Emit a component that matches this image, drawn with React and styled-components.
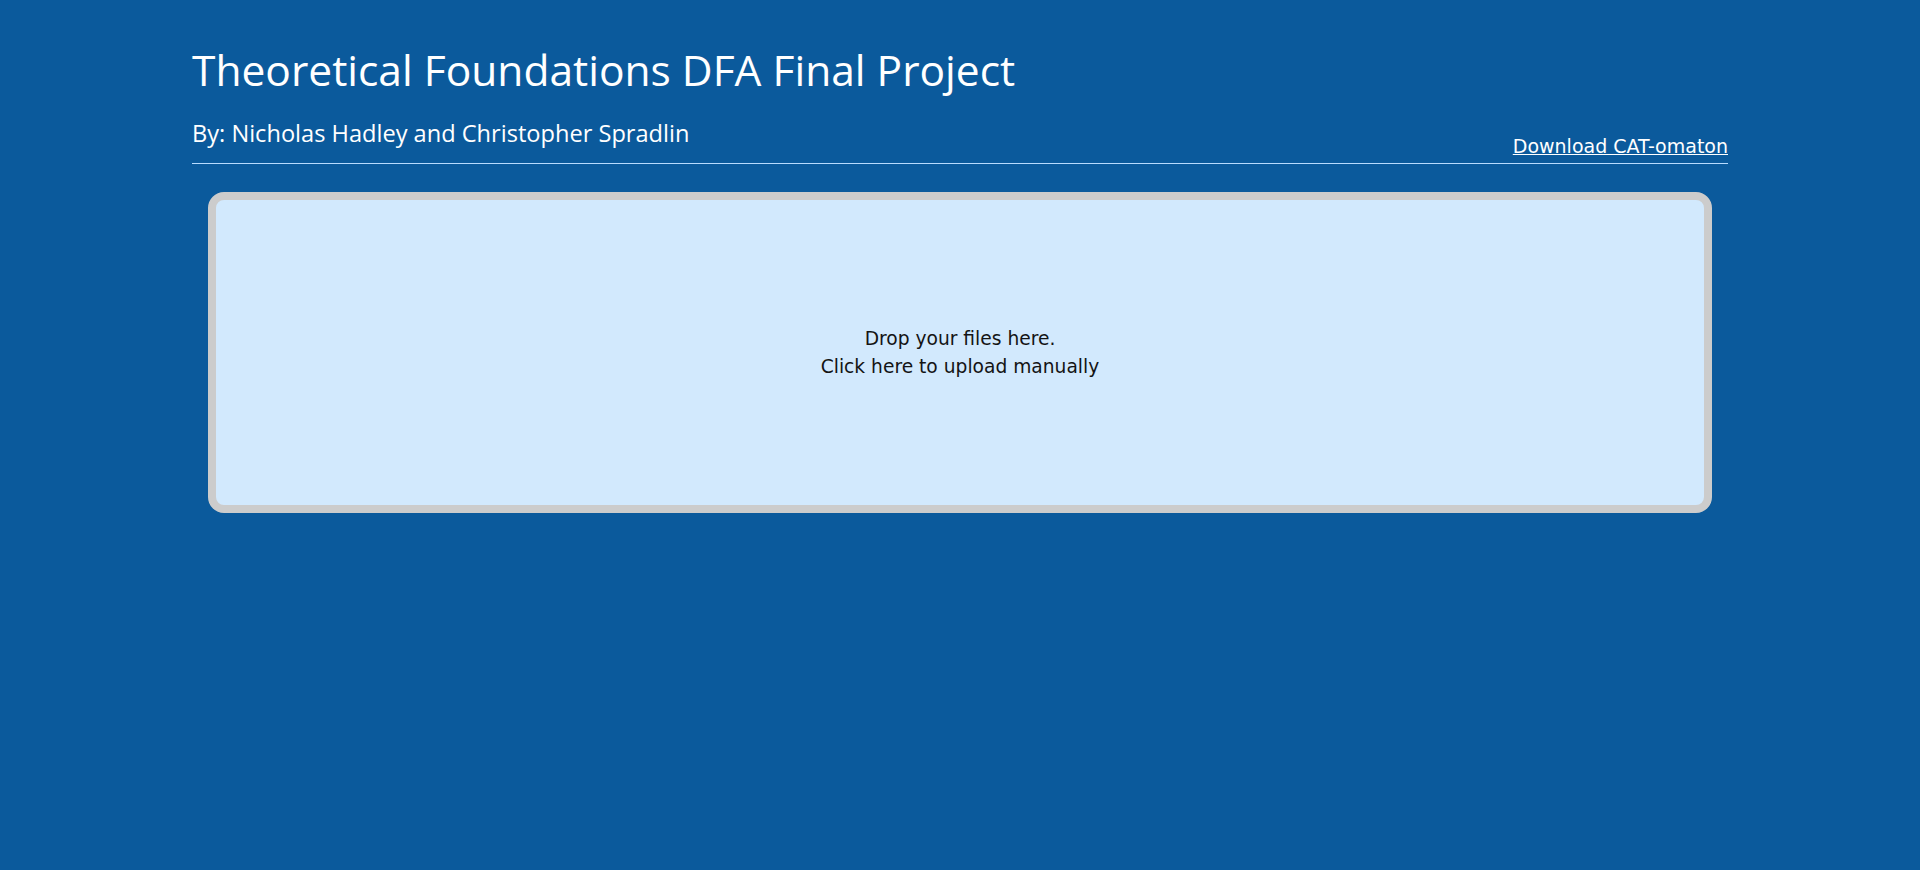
import styled, { createGlobalStyle } from "styled-components";

const GlobalStyle = createGlobalStyle`
  html, body {
    margin: 0;
    padding: 0;
    background-color: #0b5a9c;
    min-height: 100%;
  }
`;

export const Page = styled.div`
  min-height: 870px;
  padding: 0 10%;
  background-color: #0b5a9c;
`;

export const Header = styled.header`
  display: flex;
  justify-content: space-between;
  align-items: flex-end;
  padding-top: 45px;
  border-bottom: 1px solid #b9dcff;
`;

export const TitleBlock = styled.div`
  display: flex;
  flex-direction: column;
  padding-bottom: 15px;
`;

export const Title = styled.h1`
  margin: 0;
  font-family: "Open Sans", "Noto Sans", sans-serif;
  font-weight: 400;
  font-size: 42.5px;
  line-height: 50px;
  color: #ffffff;
`;

export const Authors = styled.h3`
  margin: 23px 0 0 0;
  font-family: "Open Sans", "Noto Sans", sans-serif;
  font-weight: 400;
  font-size: 23.6px;
  line-height: 30px;
  color: #ffffff;
`;

export const DownloadLink = styled.a`
  margin-bottom: 6px;
  font-family: "DejaVu Sans", Verdana, sans-serif;
  font-size: 19px;
  line-height: 22px;
  color: #ffffff;
  text-decoration: underline;
  cursor: pointer;
`;

export const DropZone = styled.div`
  box-sizing: border-box;
  height: 321px;
  margin: 28px 16px 0 16px;
  display: flex;
  flex-direction: column;
  justify-content: center;
  align-items: center;
  background-color: #d2e9fd;
  border: 8px solid #cccccc;
  border-radius: 16px;
  cursor: pointer;

  p {
    margin: 0;
    font-family: "DejaVu Sans", Verdana, sans-serif;
    font-size: 18.67px;
    line-height: 28px;
    color: #141414;
    text-align: center;
  }
`;

export default function App() {
  return (
    <>
      <GlobalStyle />
      <Page>
        <Header>
          <TitleBlock>
            <Title>Theoretical Foundations DFA Final Project</Title>
            <Authors>By: Nicholas Hadley and Christopher Spradlin</Authors>
          </TitleBlock>
          <DownloadLink href="#">Download CAT-omaton</DownloadLink>
        </Header>
        <DropZone>
          <p>Drop your files here.</p>
          <p>Click here to upload manually</p>
        </DropZone>
      </Page>
    </>
  );
}
